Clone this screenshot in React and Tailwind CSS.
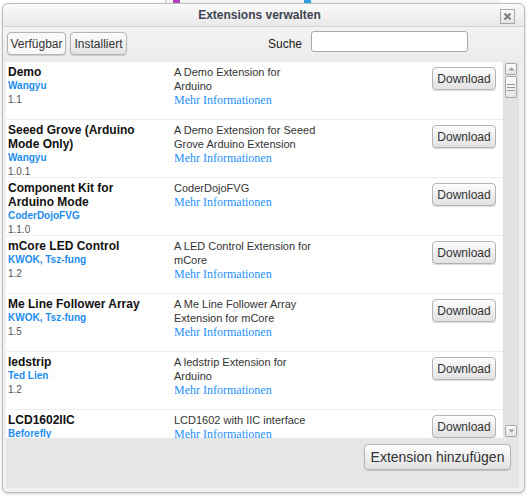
import React from 'react';

const items = [
  { name: 'Demo', author: 'Wangyu', version: '1.1', desc: 'A Demo Extension for Arduino' },
  { name: 'Seeed Grove (Arduino Mode Only)', author: 'Wangyu', version: '1.0.1', desc: 'A Demo Extension for Seeed Grove Arduino Extension' },
  { name: 'Component Kit for Arduino Mode', author: 'CoderDojoFVG', version: '1.1.0', desc: 'CoderDojoFVG' },
  { name: 'mCore LED Control', author: 'KWOK, Tsz-fung', version: '1.2', desc: 'A LED Control Extension for mCore' },
  { name: 'Me Line Follower Array', author: 'KWOK, Tsz-fung', version: '1.5', desc: 'A Me Line Follower Array Extension for mCore' },
  { name: 'ledstrip', author: 'Ted Lien', version: '1.2', desc: 'A ledstrip Extension for Arduino' },
  { name: 'LCD1602IIC', author: 'Beforefly', version: '', desc: 'LCD1602 with IIC interface' },
];

function Btn({ children, className = '' }) {
  return (
    <button className={`flex items-center justify-center rounded-[4px] border border-[#b3b3b3] bg-gradient-to-b from-[#fdfdfd] to-[#e2e2e2] text-[#333] shadow-[0_1px_1px_rgba(0,0,0,0.15)] ${className}`}>
      {children}
    </button>
  );
}

function Row({ item }) {
  return (
    <div className="flex h-[58px] shrink-0 border-b border-[#ececec] pl-[2px] pt-[3px]">
      <div className="w-[166px] shrink-0 pr-[20px]">
        <div className="text-[12px] font-bold leading-[14px] text-[#111]">{item.name}</div>
        <div className="text-[10px] font-bold leading-[14px] text-[#1c8cf0]">{item.author}</div>
        <div className="text-[10px] leading-[13px] text-[#555]">{item.version}</div>
      </div>
      <div className="w-[145px] shrink-0 text-[11px] leading-[14px] text-[#333]">
        <div>{item.desc}</div>
        <div className="font-['Liberation_Serif',serif] text-[12px] text-[#1e90ff]">Mehr Informationen</div>
      </div>
      <Btn className="ml-auto mr-[7px] mt-[2px] h-[23px] w-[64px] text-[12px]">Download</Btn>
    </div>
  );
}

function Arrow({ up }) {
  return (
    <div className="flex h-[12px] w-[12px] items-center justify-center rounded-[2px] border border-[#a9a9a9] bg-gradient-to-b from-[#fbfbfb] to-[#e3e3e3]">
      <svg width="7" height="4" viewBox="0 0 7 4">
        <path d={up ? 'M0.5 3.5 L3.5 0.5 L6.5 3.5 Z' : 'M0.5 0.5 L3.5 3.5 L6.5 0.5 Z'} fill="#9a9a9a" />
      </svg>
    </div>
  );
}

export default function App() {
  return (
    <div className="h-[496px] w-[528px] overflow-hidden bg-white font-['Liberation_Sans',Arial,sans-serif]">
      <div className="flex h-[3px]">
        <div className="w-[165px]" />
        <div className="w-[8px] border-l border-[#c8c8c8] bg-[#f3f3f3]" />
        <div className="w-[7px] bg-[#b040c0]" />
        <div className="w-[124px] bg-[#f3f3f3]" />
        <div className="w-[7px] bg-[#2aa0e0]" />
        <div className="w-[190px] bg-[#f3f3f3]" />
      </div>
      <div className="ml-[2px] flex h-[490px] w-[523px] flex-col rounded-[6px] border border-[#bdbdbd] bg-[#f0f0f0] shadow-[0_1px_3px_rgba(0,0,0,0.2)]">
        <div className="flex h-[23px] shrink-0 items-center rounded-t-[6px] border-b border-[#d2d2d2] bg-gradient-to-b from-[#fafafa] to-[#e9e9e9]">
          <div className="flex-1 pl-[16px] text-center text-[12px] font-bold text-[#3e4652]">Extensions verwalten</div>
          <div className="mr-[9px] mt-[2px] flex h-[15px] w-[15px] items-center justify-center border border-[#a6a6a6] bg-gradient-to-b from-[#fafafa] to-[#e4e4e4]">
            <svg width="9" height="9" viewBox="0 0 9 9">
              <path d="M1.5 1.5 L7.5 7.5 M7.5 1.5 L1.5 7.5" stroke="#7a7a7a" strokeWidth="2" />
            </svg>
          </div>
        </div>
        <div className="flex h-[35px] shrink-0 items-start bg-gradient-to-b from-[#f3f3f3] to-[#ececec] pl-[4px] pt-[5px]">
          <Btn className="h-[23px] w-[59px] !bg-none bg-[#f8f8f8] text-[12px]">Verfügbar</Btn>
          <Btn className="ml-[4px] h-[23px] w-[57px] text-[12px]">Installiert</Btn>
          <span className="ml-auto mt-[3px] text-[12px] text-[#222]">Suche</span>
          <div className="ml-[9px] mr-[56px] mt-[-1px] h-[21px] w-[157px] rounded-[3px] border border-[#a9a9a9] bg-white" />
        </div>
        <div className="ml-[3px] mr-[5px] flex h-[426px] flex-col bg-[#e6e6e6]">
          <div className="flex h-[376px] shrink-0">
            <div className="flex w-[497px] flex-col overflow-hidden bg-white">
              {items.map((it, i) => (
                <Row key={i} item={it} />
              ))}
            </div>
            <div className="flex w-[16px] flex-col items-center justify-between bg-[#e2e2e2] py-[1px]">
              <div className="flex flex-col items-center">
                <Arrow up />
                <div className="mt-[1px] flex h-[22px] w-[12px] flex-col items-center justify-center gap-[2px] rounded-[2px] border border-[#a9a9a9] bg-gradient-to-b from-[#fbfbfb] to-[#e6e6e6]">
                  <div className="h-px w-[8px] bg-[#999]" />
                  <div className="h-px w-[8px] bg-[#999]" />
                  <div className="h-px w-[8px] bg-[#999]" />
                </div>
              </div>
              <Arrow />
            </div>
          </div>
          <div className="flex justify-end pr-[8px] pt-[6px]">
            <Btn className="h-[26px] w-[147px] text-[14px]">Extension hinzufügen</Btn>
          </div>
        </div>
      </div>
    </div>
  );
}
